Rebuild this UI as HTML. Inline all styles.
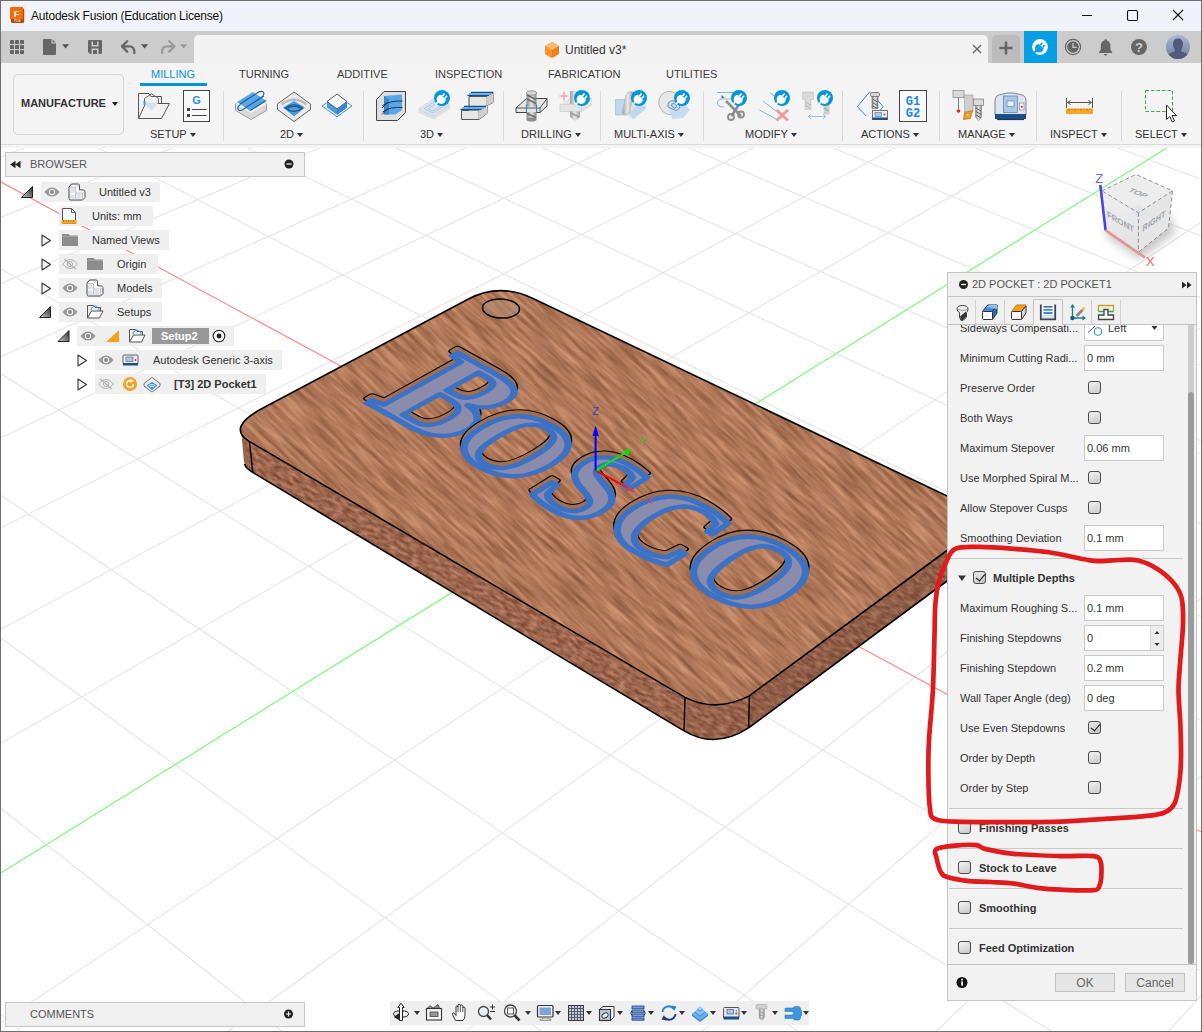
<!DOCTYPE html>
<html lang="en">
<head>
<meta charset="utf-8">
<title>Autodesk Fusion (Education License)</title>
<style>
*{box-sizing:border-box;margin:0;padding:0}
html,body{width:1202px;height:1032px;overflow:hidden;background:#fff}
body{font-family:"Liberation Sans",sans-serif;font-size:11px;color:#333;position:relative}
.abs{position:absolute}
svg{display:block;overflow:visible}
#win{position:absolute;left:0;top:0;width:1202px;height:1032px;border:1px solid #6f6f6f;pointer-events:none;z-index:50}
#canvas{position:absolute;left:0;top:144px;width:1202px;height:888px;background:#fff;overflow:hidden}
#titlebar{position:absolute;left:0;top:0;width:1202px;height:31px;background:#f0f3f9}
#titlebar .ttl{position:absolute;left:31px;top:9px;font-size:12px;letter-spacing:-0.2px;color:#111;white-space:nowrap}
#tabbar{position:absolute;left:0;top:31px;width:1202px;height:32px;background:#cccccc}
#doctab{position:absolute;left:194px;top:4px;width:794px;height:28px;background:#f3f3f3;border-radius:5px 5px 0 0}
#doctab .name{position:absolute;left:371px;top:8px;font-size:12px;color:#333;white-space:nowrap}
#plus{position:absolute;left:992px;top:4px;width:28px;height:28px;background:#bcbcbc;border-radius:5px 5px 0 0}
#ext{position:absolute;left:1024px;top:0;width:33px;height:32px;background:#069fe6}
#toolbar{position:absolute;left:0;top:63px;width:1202px;height:85px;background:#f4f4f4}
#toolbar:after{content:"";position:absolute;left:0;top:81px;width:1202px;height:1px;background:#dadada}
#wsbtn{position:absolute;left:13px;top:11px;width:111px;height:61px;border:1px solid #d4d4d4;border-radius:5px}
#wsbtn b{position:absolute;left:7px;top:22px;font-size:11px;color:#333;white-space:nowrap}
.tb-tab{position:absolute;top:5px;font-size:11px;color:#3c3c3c;white-space:nowrap}
.tb-tab.on{color:#0696d7}
.tb-lbl{position:absolute;top:65px;font-size:11px;color:#333;white-space:nowrap}
.tb-sep{position:absolute;top:28px;width:1px;height:50px;background:#d9d9d9}
.tri{display:inline-block;width:0;height:0;border-left:3px solid transparent;border-right:3px solid transparent;border-top:4px solid #333;vertical-align:middle;margin-left:3px;margin-top:-1px}
#topicons{position:absolute;left:0;top:0;z-index:5}
#browser{position:absolute;left:0;top:0;width:320px;height:400px;z-index:3}
.bhead{position:absolute;left:5px;top:152px;width:300px;height:25px;background:#f0f0f0;border:1px solid #c6c6c6}
.brow{position:absolute;height:20px;background:rgba(238,238,238,.92)}
.brow span{position:absolute;top:4px;white-space:nowrap;color:#333}
#panel{position:absolute;left:0;top:0;width:1202px;height:1032px;z-index:4}
#panel .phead{position:absolute;left:947px;top:272px;width:250px;height:25px;background:#f0f0f0;border:1px solid #c4c4c4}
#panel .phead span{position:absolute;left:24px;top:5px;color:#555;white-space:nowrap}
#panel .ptabs{position:absolute;left:947px;top:297px;width:250px;height:28px;background:#f0f0f0;border:1px solid #c4c4c4;border-top:none}
#panel .ptab-on{position:absolute;left:1033px;top:299px;width:30px;height:27px;background:#f2f2f2;border:1px solid #c4c4c4;border-bottom:none}
#panel .pbody{position:absolute;left:947px;top:325px;width:250px;height:640px;background:#f2f2f2;border-left:1px solid #c4c4c4;border-right:1px solid #c4c4c4;overflow:hidden}
#panel .pbody>*{margin-left:-948px;margin-top:-325px}
#panel .pl{position:absolute;left:960px;white-space:nowrap;color:#333;line-height:13px}
#panel .ps{position:absolute;white-space:nowrap;color:#333;font-weight:700;line-height:13px}
#panel .pi{position:absolute;left:1084px;width:80px;height:26px;background:#fff;border:1px solid #c9c9c9}
#panel .pi span{position:absolute;left:2px;top:6px;white-space:nowrap;color:#333;line-height:13px}
#panel .pc{position:absolute;width:13px;height:13px;border:1px solid #4c4c4c;border-radius:3px;background:linear-gradient(160deg,#f4f4f4,#c9c9c9)}
#panel .pc.on{background:linear-gradient(160deg,#e8e8e8,#c4c4c4)}
#panel .pc.on:after{content:"";position:absolute;left:3.500px;top:0;width:4px;height:8px;border:solid #111;border-width:0 1.500px 1.500px 0;transform:rotate(40deg)}
#panel .psep{position:absolute;left:949px;width:234px;height:1px;background:#c9c9c9}
#panel .spin{position:absolute;left:1150px;width:13px;height:24px;background:#ededed;border-left:1px solid #d6d6d6}
#panel .sbar{position:absolute;left:1188px;top:325px;width:6px;height:640px;background:#cdcdcd}
#panel .sthumb{position:absolute;left:1188px;top:392px;width:6px;height:572px;background:#9b9b9b;border-radius:3px}
#panel .pfoot{position:absolute;left:947px;top:964px;width:250px;height:37px;background:#f2f2f2;border:1px solid #c4c4c4}
#panel .pbtn{position:absolute;top:973px;width:60px;height:19px;background:#e6e6e6;border:1px solid #c0c0c0;text-align:center;line-height:18px;font-size:12px;color:#666}

</style>
</head>
<body>
<div id="canvas">
<svg id="scene" class="abs" style="left:0;top:0" width="1202" height="888" viewBox="0 144 1202 888">
<g id="grid">
<path d="M-49.6 970.1L78.4 1081.9M-48.8 768.8L343.6 1080.2M-48.1 602.5L609.1 1080.8M-49.4 461.6L872.3 1081.5M-48.8 342.7L1129.3 1079.9M-49.8 239.3L1248.9 999.4M-12.5 90.6L1251.5 746.8M130.9 90.5L1251.1 641.3M272.8 90.3L1250.7 547.2M413.5 90.2L1250.3 462.9M552.7 90.0L1250.0 386.7M692.5 90.6L1249.7 317.7M829.3 90.5L1251.8 255.8M964.8 90.3L1251.5 198.2M1099.0 90.2L1251.2 145.4M1231.9 90.0L1250.9 96.6M-48.9 119.7L30.7 90.6M-49.0 175.9L173.6 90.4M-49.1 237.4L315.2 90.3M-49.2 304.8L455.4 90.1M-49.3 379.2L592.6 90.7M-49.4 461.6L730.3 90.6M-49.5 553.4L866.7 90.4M-49.7 656.3L1001.8 90.3M-49.9 772.5L1135.7 90.1M-46.5 1054.1L1251.5 188.7M158.5 1081.6L1251.5 291.1M403.9 1080.6L1251.5 411.3M646.8 1079.5L1251.5 554.3M884.7 1081.1L1251.5 727.4M1123.2 1080.1L1251.5 941.2" stroke="#e5e5e5" stroke-width="1.100" fill="none"/>
<line x1="-10" y1="176.100" x2="1210" y2="836.700" stroke="#ff8c8c" stroke-width="1.200"/>
<line x1="-10" y1="879.700" x2="1210" y2="121.100" stroke="#84f884" stroke-width="1.300"/>
</g>
<defs>
<filter id="wood" x="0" y="0" width="100%" height="100%" color-interpolation-filters="sRGB">
<feTurbulence type="fractalNoise" baseFrequency="0.024 0.25" numOctaves="4" seed="7" result="n1"/>
<feColorMatrix in="n1" type="matrix" values="0.42 0 0 0 0.48  0.37 0 0 0 0.285  0.32 0 0 0 0.19  0 0 0 0 1"/>
</filter>
<filter id="woodside" x="0" y="0" width="100%" height="100%" color-interpolation-filters="sRGB">
<feTurbulence type="fractalNoise" baseFrequency="0.12 0.3" numOctaves="3" seed="11" result="n1"/>
<feColorMatrix in="n1" type="matrix" values="0.45 0 0 0 0.39  0.4 0 0 0 0.2  0.35 0 0 0 0.13  0 0 0 0 1"/>
</filter>
<clipPath id="topclip"><path id="topface" d="M263 408L468 299.200Q499.500 282.400 533 298.500L947 496L990 516.500L990 519L947 550.500L749.300 695.900Q716 713 685 697.400L249.400 441.400Q226 427.600 263 408Z"/></clipPath>
<clipPath id="sideclip"><path d="M241 429L244 462Q245.500 468 252.800 472.400L684 730.900Q715.500 749.400 748.600 727.900L947 581L990 549L990 519L947 550.500L749.300 695.900Q716 713 685 697.400L249.400 441.400Q238 434.500 241 429Z"/></clipPath>
</defs>
<g id="board">
<g clip-path="url(#sideclip)"><g transform="rotate(30 600 600)"><rect x="-100" y="-100" width="1500" height="1400" filter="url(#woodside)"/></g></g>
<g clip-path="url(#topclip)"><g transform="rotate(43 600 500)"><rect x="-100" y="-200" width="1500" height="1400" filter="url(#wood)"/></g></g>
<path d="M749.300 695.900L947 550.500L990 519V549L947 581L748.600 727.900Z" fill="#4a3428" fill-opacity=".16"/>
<path d="M685 697.400Q716 713 749.300 695.900L748.600 727.900Q715.500 749.400 684 730.900Z" fill="#4a3428" fill-opacity=".07"/>
<path d="M244.500 464Q246 468.500 252.800 472.400L684 730.900Q715.500 749.400 748.600 727.900L947 581" fill="none" stroke="#000" stroke-width="1.600"/>
<path d="M263 408L468 299.200Q499.500 282.400 533 298.500L947 496M947 550.500L749.300 695.900Q716 713 685 697.400L249.400 441.400Q226 427.600 263 408" fill="none" stroke="#000" stroke-width="1.600"/>
<path d="M249.400 441.400L252.800 472.400M685 697.400L684 730.900M749.300 695.900L748.600 727.900" stroke="#000" stroke-width="1.400" fill="none"/>
<ellipse cx="501" cy="308.500" rx="18.500" ry="9.500" transform="rotate(3 501 308.500)" fill="#b08a72" fill-opacity="0.6" stroke="#000" stroke-width="1.500"/>
</g>
<g id="bosco" font-family="'Liberation Serif',serif" font-weight="700" font-size="100" text-anchor="middle" stroke-linejoin="round">
<g transform="translate(0 -4.500) matrix(1.196 0.661 -1.376 0.765 450.5 398.5)"><text x="0" y="33" fill="#9b6a50" stroke="#000" stroke-width="6.800" vector-effect="non-scaling-stroke">B</text><text x="0" y="33" fill="#9b6a50" stroke="#a3704f" stroke-width="4.200" vector-effect="non-scaling-stroke">B</text></g><g transform="matrix(1.196 0.661 -1.376 0.765 450.5 398.5)"><text x="0" y="33" fill="#8b8cac" stroke="#3b72c6" stroke-width="6" vector-effect="non-scaling-stroke">B</text></g>
<g transform="translate(0 -4.500) matrix(1.006 0.560 -1.061 0.625 516.5 446.1)"><text x="0" y="33" fill="#9b6a50" stroke="#000" stroke-width="6.800" vector-effect="non-scaling-stroke">O</text><text x="0" y="33" fill="#9b6a50" stroke="#a3704f" stroke-width="4.200" vector-effect="non-scaling-stroke">O</text></g><g transform="matrix(1.006 0.560 -1.061 0.625 516.5 446.1)"><text x="0" y="33" fill="#8b8cac" stroke="#3b72c6" stroke-width="6" vector-effect="non-scaling-stroke">O</text></g>
<g transform="translate(0 -4.500) matrix(1.110 0.617 -1.109 0.692 591.3 487.3)"><text x="0" y="33" fill="#9b6a50" stroke="#000" stroke-width="6.800" vector-effect="non-scaling-stroke">S</text><text x="0" y="33" fill="#9b6a50" stroke="#a3704f" stroke-width="4.200" vector-effect="non-scaling-stroke">S</text></g><g transform="matrix(1.110 0.617 -1.109 0.692 591.3 487.3)"><text x="0" y="33" fill="#8b8cac" stroke="#3b72c6" stroke-width="6" vector-effect="non-scaling-stroke">S</text></g>
<g transform="translate(0 -4.500) matrix(1.094 0.608 -1.035 0.683 667.5 527.1)"><text x="0" y="33" fill="#9b6a50" stroke="#000" stroke-width="6.800" vector-effect="non-scaling-stroke">C</text><text x="0" y="33" fill="#9b6a50" stroke="#a3704f" stroke-width="4.200" vector-effect="non-scaling-stroke">C</text></g><g transform="matrix(1.094 0.608 -1.035 0.683 667.5 527.1)"><text x="0" y="33" fill="#8b8cac" stroke="#3b72c6" stroke-width="6" vector-effect="non-scaling-stroke">C</text></g>
<g transform="translate(0 -4.500) matrix(1.172 0.651 -1.045 0.734 749.8 571.5)"><text x="0" y="33" fill="#9b6a50" stroke="#000" stroke-width="6.800" vector-effect="non-scaling-stroke">O</text><text x="0" y="33" fill="#9b6a50" stroke="#a3704f" stroke-width="4.200" vector-effect="non-scaling-stroke">O</text></g><g transform="matrix(1.172 0.651 -1.045 0.734 749.8 571.5)"><text x="0" y="33" fill="#8b8cac" stroke="#3b72c6" stroke-width="6" vector-effect="non-scaling-stroke">O</text></g>
</g>
<g id="triad">
<defs><linearGradient id="rx" gradientUnits="userSpaceOnUse" x1="595.600" y1="470.600" x2="635.700" y2="492"><stop offset="0" stop-color="#ff0000"/><stop offset=".55" stop-color="#ff0000"/><stop offset="1" stop-color="#d04060" stop-opacity=".6"/></linearGradient></defs>
<path d="M595.600 470.600L627 487.400" stroke="url(#rx)" stroke-width="2"/><path d="M635.700 492L625.600 490.400L628.600 484.800Z" fill="#c8405a" fill-opacity=".8"/>
<path d="M595.600 470.600L625 453" stroke="#00f000" stroke-width="2"/><path d="M632.200 448.700L626.800 456.200L623.400 450.600Z" fill="#00e000"/>
<path d="M595.600 470.600V434" stroke="#0000ff" stroke-width="2"/><path d="M595.600 425.800L598.800 436H592.400Z" fill="#0000ff"/>
<text x="595.600" y="414.500" font-family="'Liberation Sans',sans-serif" font-size="11" fill="#3a3ad0" text-anchor="middle">Z</text>
<text x="643.500" y="445" font-family="'Liberation Sans',sans-serif" font-size="11" fill="#30c030" text-anchor="middle">Y</text>
<text x="649.400" y="503.500" font-family="'Liberation Sans',sans-serif" font-size="11" fill="#d04050" fill-opacity=".8" text-anchor="middle">X</text>
</g>
<g id="viewcube">
<defs><filter id="vcs" x="-30%" y="-30%" width="160%" height="160%"><feGaussianBlur stdDeviation="5"/></filter>
<linearGradient id="vcf" x1="0" y1="0" x2="0" y2="1"><stop offset="0" stop-color="#efefef"/><stop offset="1" stop-color="#e2e2e2"/></linearGradient></defs>
<path d="M1106 236L1140 260L1176 232L1168 214L1110 218Z" fill="#9a9a9a" fill-opacity=".55" filter="url(#vcs)"/>
<path d="M1101.900 190.900L1136 174.400L1172.500 190.900L1138.400 212.800Z" fill="#ededed"/>
<path d="M1101.900 190.900L1138.400 212.800V252.200L1105.600 230.400Z" fill="url(#vcf)"/>
<path d="M1138.400 212.800L1172.500 190.900L1168.500 228.200L1138.400 252.200Z" fill="#e6e6e6"/>
<circle cx="1138.500" cy="212" r="7" fill="#dfe2e8" fill-opacity=".7"/>
<path d="M1101.900 190.900L1136 174.400L1172.500 190.900L1138.400 212.800ZM1138.400 212.800V252.200M1172.500 190.900L1168.500 228.200L1138.400 252.200" fill="none" stroke="#777" stroke-width=".8" stroke-dasharray="4 2.500"/>
<path d="M1100.300 185L1105.600 230.400" stroke="#4444e0" stroke-width="2.600"/>
<path d="M1105.600 230.400L1145 257.500" stroke="#e89292" stroke-width="2.600"/>
<text x="1099.200" y="182.500" font-family="'Liberation Sans',sans-serif" font-size="13" fill="#6a6af2" text-anchor="middle">Z</text>
<text x="1150.400" y="266" font-family="'Liberation Sans',sans-serif" font-size="13" fill="#f06868" text-anchor="middle">X</text>
<g font-family="'Liberation Sans',sans-serif" font-size="9.200" font-weight="700" fill="#9fa4ac" text-anchor="middle">
<text transform="matrix(.86 .5 .1 1 1120.500 222)" x="0" y="3">FRONT</text>
<text transform="matrix(.8 -.55 -.08 1 1154 221)" x="0" y="3">RIGHT</text>
<text transform="matrix(.9 .38 -.75 .5 1138 193)" x="0" y="3">TOP</text>
</g>
</g>
<!--SCENE4-->
</svg>

</div>
<div id="titlebar"><div class="ttl">Autodesk Fusion (Education License)</div></div>
<div id="tabbar">
<div id="doctab"><div class="name">Untitled v3*</div></div>
<div id="plus"></div>
<div id="ext"></div>
</div>
<div id="toolbar">
<div id="wsbtn"><b>MANUFACTURE</b><i class="tri" style="position:absolute;left:95px;top:28px;border-top-color:#222"></i></div>
<div class="tb-tab on" style="left:151px">MILLING</div>
<div class="abs" style="left:140px;top:20px;width:67px;height:3px;background:#0696d7"></div>
<div class="tb-tab" style="left:239px">TURNING</div>
<div class="tb-tab" style="left:337px">ADDITIVE</div>
<div class="tb-tab" style="left:435px">INSPECTION</div>
<div class="tb-tab" style="left:548px">FABRICATION</div>
<div class="tb-tab" style="left:666px">UTILITIES</div>
<div class="tb-lbl" style="left:150px">SETUP<i class="tri"></i></div>
<div class="tb-lbl" style="left:280px">2D<i class="tri"></i></div>
<div class="tb-lbl" style="left:420px">3D<i class="tri"></i></div>
<div class="tb-lbl" style="left:521px">DRILLING<i class="tri"></i></div>
<div class="tb-lbl" style="left:614px">MULTI-AXIS<i class="tri"></i></div>
<div class="tb-lbl" style="left:745px">MODIFY<i class="tri"></i></div>
<div class="tb-lbl" style="left:861px">ACTIONS<i class="tri"></i></div>
<div class="tb-lbl" style="left:958px">MANAGE<i class="tri"></i></div>
<div class="tb-lbl" style="left:1050px">INSPECT<i class="tri"></i></div>
<div class="tb-lbl" style="left:1135px">SELECT<i class="tri"></i></div>
<div class="tb-sep" style="left:223px"></div>
<div class="tb-sep" style="left:363px"></div>
<div class="tb-sep" style="left:503px"></div>
<div class="tb-sep" style="left:600px"></div>
<div class="tb-sep" style="left:703px"></div>
<div class="tb-sep" style="left:842px"></div>
<div class="tb-sep" style="left:939px"></div>
<div class="tb-sep" style="left:1036px"></div>
<div class="tb-sep" style="left:1121px"></div>
</div>
<svg id="topicons" width="1202" height="144" viewBox="0 0 1202 144">
<defs>
<g id="plugshape"><path d="M-1.370 -3.170L3.810 1.310A4.600 4.600 0 1 1 -1.370 -3.170Z" fill="currentColor"/><path d="M0.400 -1.800L2.500 -4.600M3 0.300L5 -2.200" stroke="currentColor" stroke-width="1.700" fill="none"/><path d="M-3.800 4L-6.400 6.300" stroke="currentColor" stroke-width="1.600" fill="none"/></g>
<g id="plug"><circle r="8" fill="#0696d7"/><use href="#plugshape" style="color:#fff"/></g>
<linearGradient id="mtl" x1="0" x2="1"><stop offset="0" stop-color="#8a8a8a"/><stop offset="0.5" stop-color="#e6e6e6"/><stop offset="1" stop-color="#8a8a8a"/></linearGradient>
<linearGradient id="av" x1="0" y1="0" x2="0" y2="1"><stop offset="0" stop-color="#a9b8d2"/><stop offset="1" stop-color="#6d7c9c"/></linearGradient>
</defs>
<!-- fusion logo -->
<g>
<path d="M11.5 8.2Q11.5 7 12.7 7H21.8Q23 7 23 8.2L24.2 9.2V21.8Q24.2 23 23 23H12.2Q11 23 11 21.8V19H10V9Z" fill="#b8470e"/>
<path d="M10 8.2Q10 7 11.2 7H21.8Q23 7 23 8.2V19H10Z" fill="#ff6a00"/>
<text x="16.6" y="16.6" font-family="'Liberation Sans',sans-serif" font-weight="700" font-size="9.5" fill="#fff" text-anchor="middle">F</text>
<text x="17.5" y="22.2" font-family="'Liberation Sans',sans-serif" font-weight="700" font-size="3.2" fill="#f3d3c0" text-anchor="middle">FUS</text>
</g>
<!-- window controls -->
<path d="M1082 15.5H1092M1173 10L1183 20M1183 10L1173 20" stroke="#111" stroke-width="1.1" fill="none"/>
<rect x="1127.5" y="10.5" width="10" height="10" rx="1.5" fill="none" stroke="#111" stroke-width="1.1"/>
<!-- grid icon -->
<g fill="#666">
<rect x="10" y="40" width="4" height="4" rx=".6"/><rect x="15" y="40" width="4" height="4" rx=".6"/><rect x="20" y="40" width="4" height="4" rx=".6"/>
<rect x="10" y="45" width="4" height="4" rx=".6"/><rect x="15" y="45" width="4" height="4" rx=".6"/><rect x="20" y="45" width="4" height="4" rx=".6"/>
<rect x="10" y="50" width="4" height="4" rx=".6"/><rect x="15" y="50" width="4" height="4" rx=".6"/><rect x="20" y="50" width="4" height="4" rx=".6"/>
</g>
<!-- file icon -->
<path d="M43 40Q43 39 44 39H51.5V43.5H56V54Q56 55 55 55H44Q43 55 43 54Z" fill="#666"/>
<path d="M52.5 39.3L55.8 42.6H52.5Z" fill="#777"/>
<path d="M62 44.200H69.200L65.600 48.600Z" fill="#555"/>
<!-- save icon -->
<path d="M88 41.200Q88 40 89.200 40H100.800Q102 40 102 41.200V52.800Q102 54 100.800 54H90L88 52Z" fill="#666"/>
<path d="M91.500 41.500H93V45H97V41.500H98.500V46.500H91.500Z" fill="#ccc"/>
<path d="M91.500 54V48.500H98.500V54H97V50H93V54Z" fill="#ccc"/>
<!-- undo/redo -->
<path d="M127.2 41.2L122 46.4L127.2 51.6M122.4 46.4H129.5Q134.4 46.4 134.4 53" fill="none" stroke="#666" stroke-width="2.300" stroke-linecap="round" stroke-linejoin="round"/>
<path d="M141 44.200H148.200L144.600 48.600Z" fill="#555"/>
<path d="M169.2 41.2L174.4 46.4L169.2 51.6M174 46.4H166.9Q162 46.4 162 53" fill="none" stroke="#9a9a9a" stroke-width="2.300" stroke-linecap="round" stroke-linejoin="round"/>
<path d="M180 44.200H187.200L183.600 48.600Z" fill="#999"/>
<!-- doc cube -->
<g>
<path d="M552 42L559 46V54L552 58L545 54V46Z" fill="#ef7f1a"/>
<path d="M552 42L559 46L552 50L545 46Z" fill="#ffb872"/>
<path d="M552 50V58L545 54V46Z" fill="#ff9030"/>
</g>
<path d="M973 45L981 53M981 45L973 53" stroke="#666" stroke-width="1.3" fill="none"/>
<path d="M1006 41.5V54.5M999.5 48H1012.5" stroke="#666" stroke-width="2.6" fill="none"/>
<!-- extension icon -->
<g transform="translate(1040 47)"><circle r="7.900" fill="#fff"/><use href="#plugshape" style="color:#069fe6" transform="scale(.92)"/><path d="M-3.800 3.800L-8 7.700" stroke="#069fe6" stroke-width="1.600"/></g>
<!-- clock -->
<circle cx="1073" cy="47" r="7.6" fill="none" stroke="#666" stroke-width="1.2"/>
<circle cx="1073" cy="47" r="5.8" fill="#666"/>
<path d="M1073 43V47.4H1076.6" fill="none" stroke="#ccc" stroke-width="1.2"/>
<!-- bell -->
<path d="M1105.6 39.2Q1106.8 39.2 1106.9 40.4Q1110.4 41.6 1110.4 46V49.6L1112.2 52.2V53H1099V52.2L1100.8 49.6V46Q1100.8 41.6 1104.3 40.4Q1104.4 39.2 1105.6 39.2ZM1103.8 54H1107.4Q1107.2 55.6 1105.6 55.6Q1104 55.6 1103.8 54Z" fill="#666"/>
<!-- help -->
<circle cx="1139" cy="47" r="8" fill="#666"/>
<text x="1139" y="51.6" font-family="'Liberation Sans',sans-serif" font-weight="700" font-size="13" fill="#ccc" text-anchor="middle">?</text>
<!-- avatar -->
<clipPath id="avc"><circle cx="1178" cy="47" r="12"/></clipPath>
<circle cx="1178" cy="47" r="12" fill="url(#av)"/>
<g clip-path="url(#avc)"><path d="M1178 38.5Q1183 38.5 1183 44Q1183 48 1181.2 49.8V51.6Q1186.5 53 1188.5 55.5V60H1167.500V55.5Q1169.5 53 1174.8 51.6V49.800Q1173 48 1173 44Q1173 38.5 1178 38.500Z" fill="#4f5b78"/></g>
<!--TBI0-->
<!-- SETUP folder -->
<g stroke="#555" stroke-width="1" fill="none">
<path d="M138.5 118.5V93.500H149L151 96.500H161.500V103.500"/>
<path d="M138.500 118.500L145.500 103.500H169.500L161.500 118.500Z" fill="#f3f3f3"/>
<path d="M144.500 103V98.500L151.500 93.800L158.500 98.500V103" stroke="#666"/>
</g>
<path d="M144 102.500H158.500L151.500 111Z" fill="#cfe3f3"/><rect x="143.500" y="101" width="2" height="3.500" fill="#3a96dd"/>
<!-- G doc -->
<rect x="183.500" y="90.500" width="26" height="31" fill="#f8f8f8" stroke="#444" stroke-width="1"/>
<text x="196.500" y="103.500" font-family="'Liberation Sans',sans-serif" font-weight="700" font-size="11" fill="#2a8de0" text-anchor="middle">G</text>
<path d="M187 108h3v3h-3zM187 114h3v3h-3z" fill="#444"/><path d="M192 109.500H206.500M192 115.500H206.500" stroke="#444" stroke-width="1"/>
<!-- 2D adaptive -->
<g>
<path d="M235.500 104L251 97L266.500 104V110.500L251 119.500L235.500 110.500Z" fill="#d9d9d9" stroke="#8c8c8c" stroke-width=".8"/>
<path d="M235.500 104L251 113L266.500 104L251 95.500Z" fill="#f2f2f2"/>
<path d="M237 102L253 92L266 100.500L250 111Z" fill="#5aa7e6"/>
<path d="M240 104L258 92.500Q262.500 90 263.800 93Q264.500 95.500 261 97.500L243 109.500Q239 111.800 238 109Q237.200 106.500 240.500 104.500M246 107.500L264 96M250.500 110.500L266 100.500" fill="none" stroke="#1d5f9e" stroke-width="1.1"/>
</g>
<!-- 2D pocket -->
<g>
<path d="M277.500 104L294 92L310.500 104V109.500L294 121.500L277.500 109.500Z" fill="#ececec" stroke="#666" stroke-width="1"/>
<path d="M281.500 104.500Q294 95 306.500 104.500" fill="none" stroke="#bdbdbd" stroke-width="2.500"/>
<path d="M283 107.500L294 101L305 107.500L294 116.500Z" fill="#4a9ae0"/>
<path d="M285.500 108Q294 101.500 302.500 108Q294 115 285.500 108ZM288 108Q294 104.500 300 108" fill="none" stroke="#174f86" stroke-width="1.100"/>
</g>
<!-- 2D face -->
<g>
<path d="M322 106L337 116.800L352 106L337 95.500Z" fill="none" stroke="#3a96e8" stroke-width="1"/>
<path d="M327 101.500L337 94L347 101.500V107.500L337 114.800L327 107.500Z" fill="#4a9ae0"/>
<path d="M327 101.500L337 94L347 101.500L337 109Z" fill="#f7f7f7" stroke="#555" stroke-width=".9"/>
<path d="M337 109V114.800L347 107.500V101.500Z" fill="#3b86cf"/>
</g>
<!-- 3D adaptive -->
<g>
<path d="M376.500 99.500L384 91.500H405.500V112.500L397.500 120.500H376.500Z" fill="#dedede" stroke="#444" stroke-width="1"/>
<path d="M384 96L402 94.500V110L395.500 114.500H384Z" fill="#5aa7e6"/>
<path d="M384 96L389 99.500V114.500H384Z" fill="#3b86cf"/>
<path d="M382.500 105.500Q390 100.500 402.500 101M382.500 112Q390 106.500 402.500 107.500M382 108L388 102M382 114.500L388 108.500" fill="none" stroke="#17365a" stroke-width="1"/>
</g>
<!-- 3D pocket (ext) -->
<g opacity=".75">
<path d="M418.500 109L436 97L450 104.500V109L433.500 119.500L418.500 113Z" fill="#d8d8d8"/>
<path d="M418.500 109L436 97L450 104.500L433.500 116Z" fill="#cfe0f0" stroke="#b9c9d9" stroke-width=".6"/>
<path d="M424 108.500L435.500 101L444.500 105.500L433 113ZM428 108.500L435.500 103.800L440.500 106L433 110.800Z" fill="none" stroke="#8fb4d8" stroke-width=".8"/>
</g>
<use href="#plug" x="442" y="98"/>
<!-- 3D steps -->
<g>
<path d="M469 96.500H487L493 93.500V102.500L487 105.500V113.500L479 119.500H461.500V110.500H469Z" fill="#e6e6e6" stroke="#555" stroke-width="1" stroke-linejoin="round"/>
<path d="M487 96.500V105.500M479 110.500V119.500M469 110.500H479L487 105.500" fill="none" stroke="#777" stroke-width=".8"/>
<path d="M487 96.500L493 93.500V102.500L487 105.500ZM479 110.500L487 105.500V113.500L479 119.500Z" fill="#cfcfcf"/>
<path d="M467.500 95.300H489M471 92.500H493.500M460.500 109.300H481.500M464 106.500H486" fill="none" stroke="#14508e" stroke-width="1.300"/>
<path d="M469 94H491M462 108H484" stroke="#5aa7e6" stroke-width="1.300"/>
</g>
<!-- drill -->
<g>
<path d="M516 108L526.500 98.500H547V106L540 112.500H516Z" fill="#e6e6e6" stroke="#444" stroke-width="1"/>
<path d="M516 108H540L547 98.500M540 108V112.500" fill="none" stroke="#444" stroke-width=".9"/>
<rect x="526.500" y="93" width="10" height="13.500" fill="url(#mtl)"/><ellipse cx="531.500" cy="93" rx="5" ry="2.200" fill="#d6d6d6" stroke="#777" stroke-width=".7"/>
<rect x="526.500" y="112" width="10" height="7.500" fill="url(#mtl)"/><ellipse cx="531.500" cy="119.500" rx="5" ry="2" fill="#8d8d8d"/>
<path d="M527 95L536 99.500M527 99L536 103.500M527 113.500L536 117.500" stroke="#6b6b6b" stroke-width="1.600"/>
<path d="M526.500 104.500V112M536.500 104.500V112" stroke="#1e88e5" stroke-width="1.100"/>
</g>
<!-- drill ext -->
<g opacity=".8">
<path d="M560 104.500L570 98H592V104.500L581.500 111.500H560Z" fill="#e1e1e1"/>
<path d="M560 104.500H581.500L592 98M560 104.500V111.500H581.500V104.500M581.500 111.500L592 104.500" fill="none" stroke="#c4c4c4" stroke-width=".8"/>
<path d="M570 91H580V104H570ZM570 111.500H580V117L575 121L570 117Z" fill="url(#mtl)"/>
<path d="M570.500 113L579.500 117" stroke="#888" stroke-width="1.400"/>
</g>
<path d="M564 91.500V100.500M559.500 96H568.500" stroke="#f08a8a" stroke-width="1.100"/>
<use href="#plug" x="582" y="98"/>
<!-- multi-axis 1 -->
<g opacity=".8">
<path d="M615.500 99.500H627V115H615.500Z" fill="#b5d3ee" stroke="#8aa" stroke-width=".6"/>
<path d="M627 92L633 90.500L646 104.500V109L633 119.500L627 115Z" fill="#dcdcdc"/>
<path d="M628.500 113L634 119L646 107.500L640 104Z" fill="#b5d3ee"/>
<path d="M626 95Q629 90 633.500 92.500L629.500 113Q626 116 622 113.500Z" fill="url(#mtl)" stroke="#999" stroke-width=".6"/>
</g>
<use href="#plug" x="639" y="98"/>
<!-- multi-axis 2 -->
<g opacity=".8">
<ellipse cx="670" cy="103" rx="11" ry="12" fill="#e4e4e4" stroke="#9a9a9a" stroke-width=".8" transform="rotate(-30 670 103)"/>
<path d="M667 103L680 97L690 110L683 118L672.500 119Z" fill="#b9d7f2"/>
<path d="M668 107Q667 101 673 100.500L679 104Q681 109 676 110.500ZM671.500 106Q671.500 103 674 103.500L676.500 105.500Q677 108 674.500 108Z" fill="none" stroke="#5b7da0" stroke-width="1"/>
</g>
<use href="#plug" x="682" y="98"/>
<!-- modify 1 scissors -->
<g>
<path d="M717 92.500H736M724 107Q717 107 717.500 102.500Q718 98.500 724 99H745" fill="none" stroke="#8ab6e0" stroke-width="1"/>
<path d="M721.500 95L724.500 97.500L721.500 98.500Z" fill="#666"/>
<path d="M726 101L741 116M740 103L731.500 116" stroke="#8d8d8d" stroke-width="2.600" fill="none"/>
<circle cx="731" cy="117" r="3" fill="none" stroke="#8d8d8d" stroke-width="1.800"/><circle cx="741" cy="114.500" r="3" fill="none" stroke="#8d8d8d" stroke-width="1.800"/>
</g>
<use href="#plug" x="739" y="98"/>
<!-- modify 2 -->
<g>
<path d="M759.500 110L776 119M763 101L778 112.500M770 93L779 99Q781.500 101 780 103.500" fill="none" stroke="#8ab6e0" stroke-width="1"/>
<path d="M776.500 110L788 120.500M788 110L776.500 120.500" stroke="#f09a9a" stroke-width="3" fill="none"/>
</g>
<use href="#plug" x="782" y="98"/>
<!-- modify 3 -->
<g opacity=".85">
<path d="M802.500 92H813.500V99.500H811V109.500H805V99.500H802.500Z" fill="#d6d6d6" stroke="#bbb" stroke-width=".6"/>
<path d="M805.500 102L810.500 105M805.500 105.500L810.500 108.500" stroke="#aaa" stroke-width="1"/>
<path d="M823.500 104H829.500V114.500H823.500Z" fill="#c9c9c9"/><path d="M824 108L829 111" stroke="#999" stroke-width="1.200"/>
<path d="M808.500 116.500H825.500M811 114L808.500 116.500L811 119M823 114L825.500 116.500L823 119" fill="none" stroke="#7ab0e6" stroke-width=".9"/>
</g>
<use href="#plug" x="825" y="98"/>
<!-- actions 1 -->
<g>
<path d="M870 91.500L857.500 106.500L866 116M877 99.500L883 106.500L880.500 110" fill="none" stroke="#2a8de0" stroke-width="1"/>
<rect x="870.500" y="92.500" width="9" height="4" rx="1.200" fill="#d4d4d4" stroke="#666" stroke-width=".8"/>
<rect x="872" y="96.500" width="6" height="12" fill="url(#mtl)" stroke="#666" stroke-width=".6"/>
<path d="M872.500 99L877.500 102M872.500 102.500L877.500 105.500M872.500 106L877.500 108.500" stroke="#666" stroke-width="1"/>
<rect x="872.500" y="110.500" width="15" height="9" fill="#e9eef5" stroke="#555" stroke-width=".8"/>
<rect x="872.500" y="117.500" width="15" height="2.500" fill="#1d4f86"/>
<rect x="875" y="112.500" width="6.500" height="3.800" fill="#a9c9ea" stroke="#557" stroke-width=".5"/><circle cx="884.500" cy="114.500" r=".9" fill="#d23"/>
</g>
<!-- G1G2 -->
<rect x="899.500" y="90.500" width="27" height="31" fill="#f8f8f8" stroke="#444" stroke-width="1"/>
<text x="913" y="104.500" font-family="'Liberation Mono',monospace" font-weight="700" font-size="12" fill="#1e88e5" text-anchor="middle">G1</text>
<text x="913" y="116.500" font-family="'Liberation Mono',monospace" font-weight="700" font-size="12" fill="#1e88e5" text-anchor="middle">G2</text>
<!-- manage 1 -->
<g>
<rect x="953" y="90.500" width="11" height="7" fill="#d9d9d9" stroke="#888" stroke-width=".7"/>
<path d="M958.500 97.500V109" stroke="#777" stroke-width="1"/><circle cx="958.500" cy="111" r="1.800" fill="#e0202a"/>
<path d="M964.500 95H973V112H964.500Z" fill="#cfcfcf" stroke="#999" stroke-width=".6"/>
<path d="M964.500 112.500L972.500 110.500L970.500 118.500L963.500 119.500Z" fill="#f0a020" stroke="#a86c00" stroke-width=".6"/><circle cx="967.800" cy="115" r="1.200" fill="#fff" stroke="#a86c00" stroke-width=".5"/>
<rect x="973.500" y="99" width="10" height="6.500" fill="#d9d9d9" stroke="#777" stroke-width=".7"/>
<path d="M975.500 105.500H981.500V117L978.500 120.500L975.500 117Z" fill="url(#mtl)" stroke="#777" stroke-width=".5"/>
<path d="M976 108L981 111M976 111.500L981 114.500M976 115L981 118" stroke="#666" stroke-width="1"/>
</g>
<!-- manage 2 machine -->
<g>
<path d="M995 101Q995 95 1001 94.500L1007 93H1014L1020 94.500Q1026 95 1026 101V115H995Z" fill="#dfe5ee" stroke="#667" stroke-width=".8"/>
<rect x="995" y="114" width="31" height="5" fill="#1d4f86"/><path d="M997 119.500H1024" stroke="#123a66" stroke-width="1.200"/>
<rect x="1003.500" y="96" width="14" height="16.500" fill="#a9c9ea" stroke="#5a7aa0" stroke-width=".7"/>
<rect x="1007" y="101" width="7" height="5.500" fill="#e8f0fa" stroke="#5a7aa0" stroke-width=".6"/>
<rect x="1019.500" y="103" width="4.500" height="7" fill="#f4f4f8" stroke="#667" stroke-width=".5"/><circle cx="1021.800" cy="106.800" r="1" fill="#d23"/>
</g>
<!-- inspect ruler -->
<g>
<path d="M1066.500 98V108M1092.500 98V108M1068 102.500H1091M1070.500 100.500L1067.500 102.500L1070.500 104.500M1088.500 100.500L1091.500 102.500L1088.500 104.500" fill="none" stroke="#555" stroke-width="1"/>
<rect x="1066" y="108.500" width="27" height="5.500" fill="#f5a623"/>
<path d="M1069 108.500V111M1072 108.500V110M1075 108.500V111M1078 108.500V110M1081 108.500V111M1084 108.500V110M1087 108.500V111M1090 108.500V110" stroke="#b86f00" stroke-width=".7"/>
</g>
<!-- select -->
<rect x="1145.500" y="90.500" width="27" height="21" fill="none" stroke="#2eb24c" stroke-width="1" stroke-dasharray="3.500 2"/>
<path d="M1166.500 105V119.500L1169.800 116.500L1172.300 122L1174.500 121L1172 115.600H1176.500Z" fill="#fff" stroke="#222" stroke-width="1" stroke-linejoin="round"/>
<!--TBI1-->
</svg>

<div id="browser">
<div class="bhead"><span class="abs" style="left:24px;top:5px;color:#555">BROWSER</span></div>
<div class="brow" style="left:41px;top:182px;width:119px"><span style="left:58px">Untitled v3</span></div>
<div class="brow" style="left:59px;top:206px;width:94px"><span style="left:33px">Units: mm</span></div>
<div class="brow" style="left:59px;top:230px;width:110px"><span style="left:33px">Named Views</span></div>
<div class="brow" style="left:59px;top:254px;width:99px"><span style="left:58px">Origin</span></div>
<div class="brow" style="left:59px;top:278px;width:103px"><span style="left:58px">Models</span></div>
<div class="brow" style="left:59px;top:302px;width:103px"><span style="left:58px">Setups</span></div>
<div class="brow" style="left:77px;top:326px;width:157px"><div class="abs" style="left:75px;top:2px;width:57px;height:16px;background:#999"></div><span style="left:84px;color:#fff;font-weight:700">Setup2</span></div>
<div class="brow" style="left:95px;top:350px;width:187px"><span style="left:58px">Autodesk Generic 3-axis</span></div>
<div class="brow" style="left:95px;top:374px;width:171px"><span style="left:79px;font-weight:700">[T3] 2D Pocket1</span></div>
<svg class="abs" style="left:0;top:0" width="320" height="400" viewBox="0 0 320 400">
<defs>
<g id="eye"><path d="M-7.500 0Q-4 -4.600 0 -4.600Q4 -4.600 7.500 0Q4 4.600 0 4.600Q-4 4.600 -7.500 0Z" fill="#9a9a9a"/><circle r="3.100" fill="#f0f0f0"/><circle r="2" fill="#8a8a8a"/></g>
<g id="eyeoff"><path d="M-7.500 0Q-4 -4.600 0 -4.600Q4 -4.600 7.500 0Q4 4.600 0 4.600Q-4 4.600 -7.500 0Z" fill="none" stroke="#b0b0b0" stroke-width="1"/><circle r="2.600" fill="none" stroke="#b0b0b0" stroke-width="1"/><path d="M-5.500 -5L5.500 5" stroke="#b0b0b0" stroke-width="1.100"/></g>
<g id="exp"><path d="M-4 -5.500L4.500 0L-4 5.500Z" fill="#f6f6f6" stroke="#333" stroke-width="1.100" stroke-linejoin="round"/></g>
<linearGradient id="colg" x1="1" y1="0" x2="0" y2="1"><stop offset="0" stop-color="#2a2a2a"/><stop offset="1" stop-color="#c8c8c8"/></linearGradient><g id="col"><path d="M5 -5.500V5.500H-6Z" fill="url(#colg)" stroke="#222" stroke-width="1" stroke-linejoin="round"/></g>
<g id="comp"><path d="M-8 -5L-5.500 -8H1Q2.500 -8 2.500 -6.500V-2.200L6.500 -2Q8 -1.500 8 0V5.500L5.500 8H-6.500Q-8 8 -8 6.500Z" fill="#fbfbfb" stroke="#444" stroke-width="1" stroke-linejoin="round"/><path d="M-7 -3.500H-2.500V1H-7ZM-7 2.500H-2.500V7H-7ZM-.500 2H4.500V7H-.500Z" fill="#dfe2e8"/><path d="M-8 -4.500H-1.500V8M-1.500 -4.500L2 -7.500M-1.500 1H5.500L8 -1M5.500 1V7.500" fill="none" stroke="#b5b5b5" stroke-width=".8"/></g>
<g id="fold"><path d="M-8 -6H-1.500L0 -4.500H8V6H-8Z" fill="#8c8c8c"/><path d="M-8 -3.500H8" stroke="#a9a9a9" stroke-width=".8"/></g>
<g id="ofold"><path d="M-7.500 6V-6.500H-1.500L0 -4.500H5.500V-1" fill="none" stroke="#555" stroke-width="1"/><path d="M-7.500 6L-3.500 -1H8L4.500 6Z" fill="#fafafa" stroke="#555" stroke-width="1" stroke-linejoin="round"/><path d="M-3.800 -1.500V-3.800L0 -6.200L3.800 -3.800V-1.500" fill="none" stroke="#3a96dd" stroke-width="1"/></g>
</defs>
<!-- header icons -->
<path d="M15.500 160.800L10.200 164.500L15.500 168.200ZM20.500 160.800L15.200 164.500L20.500 168.200Z" fill="#222"/>
<circle cx="289" cy="164" r="4.500" fill="#222"/><path d="M286.500 164H291.500" stroke="#f0f0f0" stroke-width="1.300"/>
<!-- row1 -->
<use href="#col" x="27.500" y="192"/><use href="#eye" x="52" y="192"/><use href="#comp" x="77" y="192"/>
<!-- row2 units -->
<g transform="translate(69 216)"><path d="M-6.500 -7.500H2.500L6.500 -3.500V7.500H-6.500Z" fill="#fafafa" stroke="#555" stroke-width="1" stroke-linejoin="round"/><path d="M2.500 -7.500V-3.500H6.500" fill="none" stroke="#555" stroke-width=".9"/><rect x="-7.500" y="4" width="15" height="3.800" fill="#f5a623"/><path d="M-5.500 4V6M-3 4V5.500M-.5 4V6M2 4V5.500M4.500 4V6" stroke="#a86c00" stroke-width=".7"/></g>
<!-- row3 -->
<use href="#exp" x="46" y="240.500"/><use href="#fold" x="70" y="240"/>
<!-- row4 -->
<use href="#exp" x="46" y="264.500"/><use href="#eyeoff" x="70" y="264"/><use href="#fold" x="95" y="264"/>
<!-- row5 -->
<use href="#exp" x="46" y="288.500"/><use href="#eye" x="70" y="288"/><use href="#comp" x="95" y="288"/>
<!-- row6 -->
<use href="#col" x="45.500" y="312"/><use href="#eye" x="70" y="312"/><use href="#ofold" x="95" y="312"/>
<!-- row7 -->
<use href="#col" x="64" y="336"/><use href="#eye" x="88" y="336"/>
<path d="M119 330V342H106Z" fill="#f5a01e"/>
<use href="#ofold" x="137" y="336"/>
<circle cx="219" cy="336" r="5.800" fill="#fafafa" stroke="#222" stroke-width="1.100"/><circle cx="219" cy="336" r="2.400" fill="#222"/>
<!-- row8 -->
<use href="#exp" x="82" y="360.500"/><use href="#eye" x="106" y="360"/>
<g transform="translate(130.500 360)"><rect x="-7.500" y="-5" width="15" height="9" rx="1" fill="#e9eef5" stroke="#555" stroke-width=".9"/><rect x="-7.500" y="3" width="15" height="2.500" fill="#1d4f86"/><rect x="-4.500" y="-3" width="7" height="4.500" fill="#a9c9ea" stroke="#557" stroke-width=".6"/><circle cx="5" cy="0" r=".9" fill="#d23"/></g>
<!-- row9 -->
<use href="#exp" x="82" y="384.500"/><use href="#eyeoff" x="106" y="384"/>
<circle cx="130" cy="384" r="7" fill="#f5a01e"/><path d="M133.500 384A3.500 3.500 0 1 1 131.500 380.800" fill="none" stroke="#fff" stroke-width="1.400"/><path d="M130.500 378.800L134 381L130.500 383Z" fill="#fff"/>
<g transform="translate(152 384)"><path d="M-8 -0.500L0 -6.500L8 -0.500V2L0 8L-8 2Z" fill="#ececec" stroke="#666" stroke-width=".9"/><path d="M-5.500 1.500L0 -2L5.500 1.500L0 6Z" fill="#3a8de0"/><path d="M-3.500 1.800Q0 -1 3.500 1.800M-2 3Q0 1.500 2 3" fill="none" stroke="#fff" stroke-width=".9"/></g>
</svg>
</div>

<div id="panel">
<div class="phead"><span>2D POCKET : 2D POCKET1</span></div>
<div class="ptabs"></div><div class="ptab-on"></div>
<div class="pbody">
<div class="pl" style="top:322px">Sideways Compensati...</div>
<div class="pi" style="top:314px;height:27px;border-top:none;border-radius:0 0 2px 2px"><span style="left:23px;top:8px">Left</span></div>
<div class="pl" style="top:352px">Minimum Cutting Radi...</div>
<div class="pi" style="top:345px"><span>0 mm</span></div>
<div class="pl" style="top:382px">Preserve Order</div>
<div class="pc" style="left:1088px;top:381px"></div>
<div class="pl" style="top:412px">Both Ways</div>
<div class="pc" style="left:1088px;top:411px"></div>
<div class="pl" style="top:442px">Maximum Stepover</div>
<div class="pi" style="top:435px"><span>0.06 mm</span></div>
<div class="pl" style="top:472px">Use Morphed Spiral M...</div>
<div class="pc" style="left:1088px;top:471px"></div>
<div class="pl" style="top:502px">Allow Stepover Cusps</div>
<div class="pc" style="left:1088px;top:501px"></div>
<div class="pl" style="top:532px">Smoothing Deviation</div>
<div class="pi" style="top:525px"><span>0.1 mm</span></div>
<div class="psep" style="top:558px"></div>
<div class="pc on" style="left:973px;top:571px"></div>
<div class="ps" style="left:993px;top:572px">Multiple Depths</div>
<div class="pl" style="top:602px">Maximum Roughing S...</div>
<div class="pi" style="top:595px"><span>0.1 mm</span></div>
<div class="pl" style="top:632px">Finishing Stepdowns</div>
<div class="pi" style="top:625px"><span>0</span></div>
<div class="spin" style="top:626px"></div>
<div class="pl" style="top:662px">Finishing Stepdown</div>
<div class="pi" style="top:655px"><span>0.2 mm</span></div>
<div class="pl" style="top:692px">Wall Taper Angle (deg)</div>
<div class="pi" style="top:685px"><span>0 deg</span></div>
<div class="pl" style="top:722px">Use Even Stepdowns</div>
<div class="pc on" style="left:1088px;top:721px"></div>
<div class="pl" style="top:752px">Order by Depth</div>
<div class="pc" style="left:1088px;top:751px"></div>
<div class="pl" style="top:782px">Order by Step</div>
<div class="pc" style="left:1088px;top:781px"></div>
<div class="psep" style="top:808px"></div>
<div class="pc" style="left:958px;top:821px"></div>
<div class="ps" style="left:979px;top:822px">Finishing Passes</div>
<div class="psep" style="top:848px"></div>
<div class="pc" style="left:958px;top:861px"></div>
<div class="ps" style="left:979px;top:862px">Stock to Leave</div>
<div class="psep" style="top:888px"></div>
<div class="pc" style="left:958px;top:901px"></div>
<div class="ps" style="left:979px;top:902px">Smoothing</div>
<div class="psep" style="top:928px"></div>
<div class="pc" style="left:958px;top:941px"></div>
<div class="ps" style="left:979px;top:942px">Feed Optimization</div>
<div class="sbar"></div><div class="sthumb"></div>
</div>
<div class="pfoot"></div>
<div class="pbtn" style="left:1055px">OK</div><div class="pbtn" style="left:1125px">Cancel</div>
<svg class="abs" style="left:0;top:0" width="1202" height="1032" viewBox="0 0 1202 1032">
<circle cx="963.500" cy="284.500" r="4.500" fill="#222"/><path d="M961 284.500H966" stroke="#f0f0f0" stroke-width="1.300"/>
<path d="M1182 281.500L1186.500 285L1182 288.500ZM1187 281.500L1191.500 285L1187 288.500Z" fill="#222"/>
<!--PTI0-->
<path d="M975.500 300V324M1004.500 300V324M1091.500 300V324M1120.500 300V324" stroke="#cfcfcf" stroke-width="1"/>
<!-- tool -->
<g><path d="M957 309Q957 305.500 962.500 305.500Q968 305.500 968 309Q968 311.500 966.500 312.500V317L963 320.500H961L959.500 317V312.500Q957 311.500 957 309Z" fill="#ececec" stroke="#444" stroke-width="1"/><path d="M960 316.500L966 311.500V316.800L963 320H961.200Z" fill="#333"/><path d="M957.500 309.500Q962.500 312 967.500 309.500" fill="none" stroke="#888" stroke-width=".8"/></g>
<!-- cube blue -->
<g stroke="#333" stroke-width="1" stroke-linejoin="round"><path d="M982.500 311.500L987.500 305H997L992.500 311.500Z" fill="#3a8de0"/><path d="M992.500 311.500L997 305V313L992.500 319.500Z" fill="#2a6db8"/><rect x="982.500" y="311.500" width="10" height="8" rx="1" fill="#fafafa"/><path d="M986 307L989.500 305H997V309Z" fill="#8fc1f0" stroke="none"/></g>
<!-- cube orange -->
<g stroke-linejoin="round"><path d="M1011.500 311.500L1016.500 305H1026L1021.500 311.500Z" fill="#f5a01e" stroke="#c57a08" stroke-width="1"/><path d="M1021.500 311.500L1026 306V313L1021.500 319.500Z" fill="#d9d9d9" stroke="#333" stroke-width="1"/><rect x="1011.500" y="311.500" width="10" height="8" rx="1" fill="#fafafa" stroke="#333" stroke-width="1"/></g>
<!-- passes (active) -->
<g><rect x="1041.500" y="315" width="13" height="4" fill="#dde2ea"/><path d="M1040.800 304.500V319.300H1055.200V304.500" fill="none" stroke="#3c4656" stroke-width="1.800"/><path d="M1043.500 309.800H1052.500M1043.500 313H1052.500" stroke="#3a8de0" stroke-width="1.800"/><path d="M1043.500 306.800H1052.500" stroke="#2b4f86" stroke-width="1.300"/></g>
<!-- linking -->
<g><path d="M1072.500 318V306M1072.500 318H1084" stroke="#1c7a9c" stroke-width="1.400" fill="none"/><path d="M1070 307.500L1072.500 304L1075 307.500ZM1082.500 315.500L1086 318L1082.500 320.500Z" fill="#1c7a9c"/><circle cx="1072.500" cy="318" r="2.300" fill="#1c5f7c"/><path d="M1075.500 315L1081.500 309L1083.500 311L1077.500 317Z" fill="#888"/><path d="M1081.500 309L1083.500 306.500L1085.500 308.500L1083.500 311Z" fill="#f2c14e"/></g>
<!-- T -->
<g fill="none" stroke-width="1.300"><path d="M1098.500 311.500V305.500H1113.500V311.500" stroke="#c9a21a"/><path d="M1098.500 311.500H1104M1108 311.500H1113.500" stroke="#2eb24c"/><path d="M1104 309.500V315H1098.500V319.500H1113.500V315H1108V309.500Z" stroke="#444" fill="#fafafa"/></g>
<!--PTI1-->
<path d="M1088 332.500L1095 326" stroke="#555" stroke-width="1"/><circle cx="1098" cy="331.500" r="3.700" fill="#fff" stroke="#2a8de0" stroke-width="1.100"/>
<path d="M1151.500 326H1157.500L1154.500 330Z" fill="#333"/>
<path d="M958 575.500H966L962 581Z" fill="#333"/>
<path d="M1154.500 634L1157 631L1159.500 634ZM1154.500 643L1157 646L1159.500 643Z" fill="#333"/>
<circle cx="962" cy="982.500" r="5.500" fill="#111"/><rect x="961.200" y="981.300" width="1.700" height="4.400" fill="#fff"/><rect x="961.200" y="978.700" width="1.700" height="1.700" fill="#fff"/>
</svg>
</div>

<div class="abs" style="left:5px;top:1002px;width:300px;height:25px;background:#f0f0f0;border:1px solid #c6c6c6;z-index:3"><span class="abs" style="left:24px;top:5px;color:#555">COMMENTS</span></div>
<div class="abs" style="left:390px;top:1001px;width:419px;height:24px;background:#efefef;z-index:3"></div>
<svg class="abs" style="left:0;top:990px;z-index:4" width="1202" height="42" viewBox="0 990 1202 42">
<circle cx="288.500" cy="1014" r="4.500" fill="#222"/><path d="M286 1014H291M288.500 1011.500V1016.500" stroke="#f0f0f0" stroke-width="1.200"/>
<g fill="#333"><path id="nt" d="M414 1011H420L417 1015Z"/><use href="#nt" x="111"/><use href="#nt" x="141"/><use href="#nt" x="172"/><use href="#nt" x="203"/><use href="#nt" x="234"/><use href="#nt" x="265"/><use href="#nt" x="296"/><use href="#nt" x="327"/><use href="#nt" x="358"/><use href="#nt" x="389"/></g>
<!-- orbit -->
<g fill="none" stroke="#222" stroke-width="1"><path d="M396.500 1017Q393.500 1015.800 393.500 1013.800Q393.500 1010.800 401 1010.800Q408.500 1010.800 408.500 1013.800Q408.500 1016.800 402.500 1017.200"/><path d="M399.500 1020.500V1007.500H397.800L401 1003.200L404.200 1007.500H402.500V1020.500Z" fill="#fafafa"/><path d="M398.500 1014L394.500 1017L399 1019.500Z" fill="#222"/></g>
<!-- look at -->
<g><rect x="426.500" y="1008.500" width="15" height="11.500" fill="#f5f5f5" stroke="#333" stroke-width="1.100"/><rect x="430" y="1012" width="8" height="4.500" fill="#999" stroke="#444" stroke-width=".8"/><path d="M427.500 1008L430 1005.500L433 1008L438 1004.500L439.500 1008" fill="#888" stroke="#444" stroke-width=".8"/></g>
<!-- hand -->
<g><path d="M455.500 1020.500Q453.500 1017 452.500 1014.500Q452 1013 453.500 1013Q455 1013.500 456 1015.500V1007Q456 1005.800 457 1005.800Q458 1005.800 458 1007V1005.500Q458 1004.300 459.200 1004.300Q460.400 1004.300 460.400 1005.500V1006.300Q460.400 1005 461.600 1005Q462.800 1005 462.800 1006.300V1008Q462.800 1007 463.900 1007Q465 1007 465 1008.200V1015Q465 1018.500 463 1020.500Z" fill="#fafafa" stroke="#333" stroke-width="1"/><path d="M458 1007V1012M460.400 1006.500V1012M462.800 1008V1012" stroke="#333" stroke-width=".8"/></g>
<!-- zoom +- -->
<g><circle cx="483.500" cy="1011.500" r="5" fill="#e8f0f8" stroke="#444" stroke-width="1.300"/><path d="M487 1015L491 1019.500" stroke="#333" stroke-width="2.400"/><path d="M490 1007H495M492.500 1004.500V1009.500M490 1011.500H495" stroke="#333" stroke-width="1"/></g>
<!-- zoom window -->
<g><circle cx="510.500" cy="1011" r="6" fill="#f5f5f5" stroke="#444" stroke-width="1.300"/><rect x="507.500" y="1008" width="6" height="6" fill="#fafafa" stroke="#555" stroke-width="1"/><path d="M514.800 1015.500L519.500 1020.500" stroke="#333" stroke-width="2.600"/></g>
<!-- display -->
<g><rect x="537.500" y="1005.500" width="15.500" height="11.500" rx="1" fill="#f5f5f5" stroke="#333" stroke-width="1.200"/><rect x="539.500" y="1007.500" width="11.500" height="7.500" fill="#7ea3d8"/><path d="M543 1017.500H548V1019H551V1020.500H540V1019H543Z" fill="#d0d0d0" stroke="#777" stroke-width=".6"/></g>
<!-- grid -->
<g><rect x="568.500" y="1005.500" width="15" height="15" fill="#c5cad6" stroke="#333" stroke-width="1"/><path d="M571.500 1005.500V1020.500M574.500 1005.500V1020.500M577.500 1005.500V1020.500M580.500 1005.500V1020.500M568.500 1008.500H583.500M568.500 1011.500H583.500M568.500 1014.500H583.500M568.500 1017.500H583.500" stroke="#4a5068" stroke-width=".9"/></g>
<!-- viewports -->
<g><path d="M599.500 1009.500L603 1006.500H614V1017L610.500 1020.500" fill="#f5f5f5" stroke="#333" stroke-width="1"/><rect x="599.500" y="1009.500" width="11" height="11" fill="#b9c7dc" stroke="#333" stroke-width="1.100"/><ellipse cx="605" cy="1015.500" rx="3.300" ry="2.300" fill="#f5f5f5" stroke="#333" stroke-width=".9" transform="rotate(-30 605 1015.500)"/></g>
<!-- layers -->
<g><rect x="632" y="1006" width="12" height="2.800" fill="#6f9fe0" stroke="#1f3f7a" stroke-width=".8"/><rect x="632" y="1010" width="12" height="2.800" fill="#6f9fe0" stroke="#1f3f7a" stroke-width=".8"/><rect x="632" y="1014" width="12" height="2.800" fill="#6f9fe0" stroke="#1f3f7a" stroke-width=".8"/><rect x="632" y="1018" width="12" height="2.200" fill="#6f9fe0" stroke="#1f3f7a" stroke-width=".8"/><path d="M632 1011Q629.500 1013 632 1015.500M644 1011Q646.500 1013 644 1015.500" fill="none" stroke="#1f3f7a" stroke-width="1"/></g>
<!-- refresh -->
<g fill="none" stroke-width="1.900"><path d="M662.500 1012A6.300 6.300 0 0 1 673.500 1008.500" stroke="#2a7de0"/><path d="M675.500 1014A6.300 6.300 0 0 1 664.500 1017.500" stroke="#1f3f7a"/><path d="M671.500 1005.500L676.500 1006.500L674 1011Z" fill="#2a7de0" stroke="none"/><path d="M666.500 1020.500L661.500 1019.500L664 1015Z" fill="#1f3f7a" stroke="none"/></g>
<!-- pyramid -->
<g><path d="M692 1014L700 1008L708 1014V1016L700 1022L692 1016Z" fill="#3f8fd8"/><path d="M692 1014L700 1008L708 1014L700 1020Z" fill="#6db3ee"/><path d="M695 1011.500L700 1007.500L705 1011.500V1013L700 1017L695 1013Z" fill="#3f8fd8"/><path d="M695 1011.500L700 1007.500L705 1011.500L700 1015.500Z" fill="#8cc6f5"/><path d="M697.500 1008.500L700 1006.500L702.500 1008.500V1010L700 1012L697.500 1010Z" fill="#4a9ae0"/><path d="M697.500 1008.500L700 1006.500L702.500 1008.500L700 1010.500Z" fill="#a9d6fa"/></g>
<!-- machine -->
<g><rect x="723.500" y="1007.500" width="15.500" height="10.500" rx="1" fill="#e3e8f0" stroke="#555" stroke-width="1"/><rect x="723.500" y="1016.500" width="15.500" height="3" fill="#1d4f86"/><rect x="727" y="1009.500" width="6.500" height="4.500" fill="#a9c9ea" stroke="#557" stroke-width=".7"/><circle cx="736.300" cy="1013.500" r="1" fill="#d23"/><circle cx="736.300" cy="1010.800" r=".7" fill="#2a7de0"/></g>
<!-- tool -->
<g><rect x="756" y="1004.500" width="11" height="4.500" rx="1" fill="#cfcfcf" stroke="#aaa" stroke-width=".6"/><path d="M759 1009H764.500V1018L761.800 1020.500L759 1018Z" fill="url(#mtl)" stroke="#aaa" stroke-width=".5"/><path d="M759.500 1011.500L764 1013.500M759.500 1014.500L764 1016.500M759.500 1017.500L763 1019" stroke="#999" stroke-width="1"/></g>
<!-- connector -->
<path d="M785 1008H793L794.500 1006.500H799L800.500 1008V1010.500H801.500V1016H800.500V1018.500L799 1020H794.500L793 1018.500H785V1015H791.500Q793.500 1015 793.500 1013.200Q793.500 1011.500 791.500 1011.500H785Z" fill="#3f95dd" stroke="#2a7cc8" stroke-width=".6"/>
</svg>

<svg id="annot" class="abs" style="left:0;top:0;z-index:8" width="1202" height="1032" viewBox="0 0 1202 1032">
<path d="M955.2 548.8C960.7 546.1 968.9 546.9 978.7 546.9C988.5 546.9 1002.2 547.9 1013.9 548.8C1025.6 549.7 1037.3 550.5 1049.0 552.3C1060.7 554.0 1076.0 557.8 1084.2 559.3C1092.4 560.8 1092.4 561.1 1098.3 561.2C1104.2 561.3 1112.8 560.1 1119.4 560.0C1126.1 559.9 1131.9 559.0 1138.2 560.5C1144.5 562.0 1151.1 565.0 1157.0 568.7C1162.9 572.4 1169.3 577.9 1173.4 582.8C1177.5 587.7 1180.0 591.1 1181.6 598.0C1183.2 604.9 1183.2 613.8 1183.0 624.0C1182.8 634.2 1181.2 648.0 1180.4 659.0C1179.7 670.0 1178.5 679.0 1178.5 690.0C1178.5 701.0 1180.0 713.5 1180.4 725.0C1180.8 736.5 1181.2 749.3 1181.0 758.8C1180.8 768.3 1180.4 774.8 1179.3 782.2C1178.2 789.6 1177.1 798.3 1174.6 803.4C1172.0 808.5 1169.3 810.6 1164.0 812.7C1158.7 814.9 1152.3 815.3 1142.9 816.3C1133.5 817.3 1121.4 817.7 1107.7 818.6C1094.0 819.5 1076.4 821.1 1060.8 821.7C1045.2 822.3 1031.5 822.1 1013.9 822.1C996.3 822.1 968.5 822.3 955.2 821.7C941.9 821.1 938.3 820.9 934.1 818.6C929.9 816.3 930.9 815.2 929.9 808.0C928.9 800.8 928.5 786.5 928.4 775.2C928.2 763.9 928.2 754.2 929.0 740.0C929.8 725.8 932.0 707.4 932.9 690.0C933.8 672.6 934.1 649.8 934.5 635.6C934.9 621.5 934.6 614.1 935.3 605.1C936.0 596.1 937.0 588.7 938.8 581.6C940.5 574.5 943.1 568.3 945.8 562.8C948.5 557.3 949.7 551.4 955.2 548.8Z" fill="none" stroke="#e11b1b" stroke-width="4.700" stroke-linejoin="round" stroke-linecap="round"/>
<path d="M936.4 849.1C939.5 847.2 948.6 846.3 955.2 845.6C961.9 844.9 971.2 844.5 976.3 845.1C981.4 845.7 979.4 847.7 985.7 849.1C992.0 850.5 1001.4 852.6 1013.9 853.8C1026.4 855.0 1047.5 855.7 1060.8 856.1C1074.1 856.5 1086.9 855.1 1093.6 856.1C1100.2 857.1 1099.4 858.7 1100.7 862.0C1102.0 865.3 1101.5 872.2 1101.3 876.1C1101.1 880.0 1100.8 883.1 1099.5 885.5C1098.2 887.9 1100.0 889.5 1093.6 890.2C1087.1 890.9 1070.2 890.1 1060.8 889.7C1051.4 889.3 1045.1 888.8 1037.3 887.8C1029.5 886.8 1021.7 884.6 1013.9 883.6C1006.1 882.6 998.2 882.5 990.4 882.0C982.6 881.5 973.9 881.6 966.9 880.8C959.9 880.0 952.5 878.7 948.2 877.3C943.9 875.9 943.1 875.9 941.1 872.6C939.1 869.3 937.2 861.2 936.4 857.3C935.6 853.4 933.3 851.0 936.4 849.1Z" fill="none" stroke="#e11b1b" stroke-width="4.700" stroke-linejoin="round" stroke-linecap="round"/>
</svg>

<div id="win"></div>
</body>
</html>
